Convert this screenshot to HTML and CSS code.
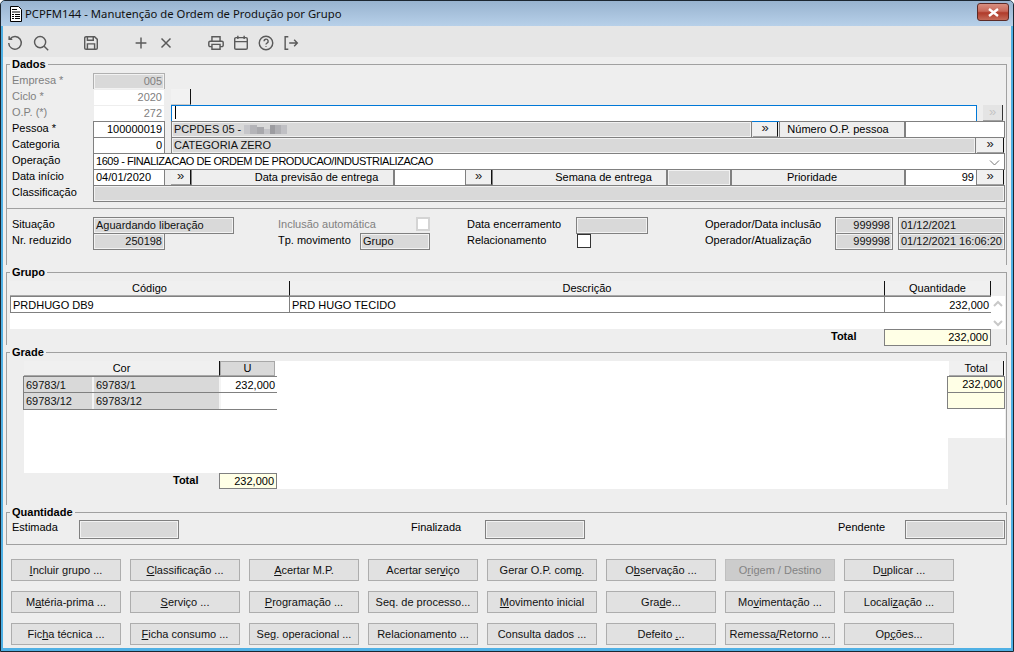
FILE: index.html
```html
<!DOCTYPE html>
<html lang="pt">
<head>
<meta charset="utf-8">
<title>PCPFM144</title>
<link rel="stylesheet" href="styles.css">
</head>
<body>
<div class="window">
  <header class="titlebar">
    <svg class="appicon" width="16" height="16" viewBox="0 0 16 16"><path d="M2.500 .5h8l3 3v12h-11z" fill="#fff" stroke="#000"/><path d="M4 3h5v1H4zM4 5.500h8v1H4zM4 8h2v1H4zM7 8h5v1H7zM4 10h2v1H4zM7 10h5v1H7zM4 12h2v1H4zM7 12h5v1H7z" fill="#000"/></svg>
    <span class="title">PCPFM144 - Manutenção de Ordem de Produção por Grupo</span>
    <span class="close"><svg width="13" height="9" viewBox="0 0 13 9"><path d="M2 1l9 7M11 1l-9 7" stroke="#fff" stroke-width="2.400" fill="none"/></svg></span>
  </header>
  <div class="toolbar">
    <svg class="tool first" viewBox="0 0 20 20"><path d="M4.500 5.500A7 7 0 1 1 3 10M3.500 2.500v3.500H7" /></svg>
    <svg class="tool" viewBox="0 0 20 20"><circle cx="9" cy="9" r="6.200"/><path d="M13.500 13.500L18 18"/></svg>
    <svg class="tool gap25" viewBox="0 0 20 20"><path d="M3 4.500A1.500 1.500 0 0 1 4.500 3H14l3 3v9.500a1.500 1.500 0 0 1-1.500 1.500h-11A1.500 1.500 0 0 1 3 15.500zM6 3v4h6.500V3M6 17v-6h8v6"/></svg>
    <svg class="tool gap25" viewBox="0 0 20 20"><path d="M10 4v12M4 10h12"/></svg>
    <svg class="tool" viewBox="0 0 20 20"><path d="M5 5l10 10M15 5L5 15"/></svg>
    <svg class="tool gap25" viewBox="0 0 20 20"><path d="M5.500 8V3h9v5M5.500 14H3.500A1.500 1.500 0 0 1 2 12.500V9.500A1.500 1.500 0 0 1 3.500 8h13A1.500 1.500 0 0 1 18 9.500v3a1.500 1.500 0 0 1-1.500 1.500h-2M5.500 11.500h9V17h-9z"/></svg>
    <svg class="tool" viewBox="0 0 20 20"><path d="M4.500 4h11A1.500 1.500 0 0 1 17 5.500v10a1.500 1.500 0 0 1-1.500 1.500h-11A1.500 1.500 0 0 1 3 15.500v-10A1.500 1.500 0 0 1 4.500 4zM3 8.500h14M6.500 2v3.500M13.500 2v3.500"/></svg>
    <svg class="tool" viewBox="0 0 20 20"><circle cx="10" cy="10" r="7.500"/><path d="M7.800 8a2.300 2.300 0 1 1 3.300 2.100c-.8.400-1.100.9-1.100 1.700M10 13.500v1"/></svg>
    <svg class="tool" viewBox="0 0 20 20"><path d="M7 3H3.500v14H7M8 10h9M13.500 6.500L17 10l-3.500 3.500"/></svg>
  </div>

  <main class="client">
    <fieldset class="sec dados">
      <legend>Dados</legend>
      <div class="row"><span class="lbl off w81">Empresa *</span><span class="f ro num off w72">005</span></div>
      <div class="row"><span class="lbl off w81">Ciclo *</span><span class="f soft num off w72">2020</span><span class="b blank w20 ml6"></span></div>
      <div class="row"><span class="lbl off w81">O.P. (*)</span><span class="f soft num off w72">272</span><span class="f focus w806 ml6"><i class="caret"></i></span><span class="b dim w20 ml6">»</span></div>
      <div class="row"><span class="lbl w81">Pessoa *</span><span class="f num w72">100000019</span><span class="f ro w581 ml6">PCPDES 05 -&nbsp;<svg class="blur" width="43" height="9" viewBox="0 0 43 9"><path d="M0 0h6v9H0z" fill="#c6c6ca"/><path d="M6 0h7v9H6z" fill="#b4b4b8"/><path d="M13 2h7v7h-7z" fill="#a8a8ac"/><path d="M20 4h6v5h-6z" fill="#c4c4c8"/><path d="M26 0h5v9h-5z" fill="#9c9ca0"/><path d="M31 0h6v9h-6z" fill="#b0b0b4"/><path d="M37 0h6v9h-6z" fill="#c0c0c4"/></svg></span><span class="b w25 ml1">»</span><span class="f cap pr8 w126 ml1">Número O.P. pessoa</span><span class="f w100"></span></div>
      <div class="row"><span class="lbl w81">Categoria</span><span class="f num w72">0</span><span class="f ro w805 ml6">CATEGORIA ZERO</span><span class="b w27 ml1">»</span></div>
      <div class="row"><span class="lbl w81">Operação</span><span class="f caps w912">1609 - FINALIZACAO DE ORDEM DE PRODUCAO/INDUSTRIALIZACAO<svg class="chev" width="11" height="6" viewBox="0 0 11 6"><path d="M1 .5l4.500 4.500L10 .5" fill="none" stroke="#777"/></svg></span></div>
      <div class="row"><span class="lbl w81">Data início</span><span class="f w72">04/01/2020</span><span class="b w20 ml6">»</span><span class="f cap pl50 w203">Data previsão de entrega</span><span class="f w72"></span><span class="b w26">»</span><span class="f cap pl50 w175">Semana de entrega</span><span class="f ro w64"></span><span class="f cap pr12 w174">Prioridade</span><span class="f num w72">99</span><span class="b w27">»</span></div>
      <div class="row"><span class="lbl w81">Classificação</span><span class="f ro w912"></span></div>
    </fieldset>

    <section class="sec status">
      <div class="row"><span class="lbl w81">Situação</span><span class="f ro w141">Aguardando liberação</span><span class="lbl off w138 ml44">Inclusão automática</span><span class="chk dis"></span><span class="lbl w109 ml37">Data encerramento</span><span class="f ro w72"></span><span class="lbl w130 ml57">Operador/Data inclusão</span><span class="f ro num w58">999998</span><span class="f ro w107 ml5">01/12/2021</span></div>
      <div class="row"><span class="lbl w81">Nr. reduzido</span><span class="f ro num w72">250198</span><span class="lbl w82 ml113">Tp. movimento</span><span class="f ro w70">Grupo</span><span class="lbl w110 ml37">Relacionamento</span><span class="chk"></span><span class="lbl w130 ml114">Operador/Atualização</span><span class="f ro num w58">999998</span><span class="f ro w107 ml5">01/12/2021 16:06:20</span></div>
    </section>

    <fieldset class="sec grupo">
      <legend>Grupo</legend>
      <div class="ghead"><span class="h w280">Código</span><span class="h w595">Descrição</span><span class="h w106">Quantidade</span></div>
      <div class="gbody">
        <div class="grow"><span class="c w280">PRDHUGO DB9</span><span class="c w595">PRD HUGO TECIDO</span><span class="c num w106">232,000</span></div>
        <div class="scroll">
          <svg width="10" height="7" viewBox="0 0 10 7"><path d="M1 6l4-4 4 4" fill="none" stroke="#c8c8c8" stroke-width="2"/></svg>
          <svg width="10" height="7" viewBox="0 0 10 7"><path d="M1 1l4 4 4-4" fill="none" stroke="#c8c8c8" stroke-width="2"/></svg>
        </div>
      </div>
      <div class="gtotal"><span class="tot w53">Total</span><span class="f sum num w107">232,000</span></div>
    </fieldset>

    <fieldset class="sec grade">
      <legend>Grade</legend>
      <div class="gradegrid">
        <div class="gleft">
          <div class="sheet">
            <div class="ghead"><span class="h w196">Cor</span><span class="h u w55">U</span></div>
            <div class="crow first"><span class="c ro2 w70">69783/1</span><span class="c ro2 w127">69783/1</span><span class="c num w56">232,000</span></div>
            <div class="crow"><span class="c ro2 w70">69783/12</span><span class="c ro2 w127">69783/12</span><span class="c num w56"></span></div>
          </div>
          <div class="gfoot"><span class="tot w46 ml149">Total</span><span class="f sum num w58">232,000</span><span class="fill"></span></div>
        </div>
        <div class="gright">
          <span class="h w55 rh">Total</span>
          <span class="f sum num w58 rc">232,000</span>
          <span class="f sum num w58 rc"></span>
        </div>
      </div>
    </fieldset>

    <fieldset class="sec quant">
      <legend>Quantidade</legend>
      <div class="qrow"><span class="lbl w67">Estimada</span><span class="f ro q w100"></span><span class="lbl w74 ml232">Finalizada</span><span class="f ro q w100"></span><span class="lbl w67 ml253">Pendente</span><span class="f ro q w100"></span></div>
    </fieldset>

    <nav class="buttons">
      <button><u>I</u>ncluir grupo ...</button>
      <button><u>C</u>lassificação ...</button>
      <button><u>A</u>certar M.P.</button>
      <button>Acertar ser<u>v</u>iço</button>
      <button>Gerar O.P. com<u>p</u>.</button>
      <button>O<u>b</u>servação ...</button>
      <button class="off-btn">O<u>r</u>igem / Destino</button>
      <button>D<u>u</u>plicar ...</button>
      <button>M<u>a</u>téria-prima ...</button>
      <button><u>S</u>erviço ...</button>
      <button><u>P</u>rogramação ...</button>
      <button>Seq. de processo...</button>
      <button><u>M</u>ovimento inicial</button>
      <button>Gra<u>d</u>e...</button>
      <button>Mo<u>v</u>imentação ...</button>
      <button>Locali<u>z</u>ação ...</button>
      <button>Fic<u>h</u>a técnica ...</button>
      <button><u>F</u>icha consumo ...</button>
      <button>Se<u>g</u>. operacional ...</button>
      <button>Relacionamento ...</button>
      <button>Consulta dados ...</button>
      <button>Defeito <u>.</u>..</button>
      <button>Remessa<u>/</u>Retorno ...</button>
      <button>Op<u>ç</u>ões...</button>
    </nav>
  </main>
</div>
</body>
</html>
```
FILE: styles.css
```css
* { box-sizing: border-box; }
html, body { margin: 0; padding: 0; }
body { width: 1014px; height: 652px; overflow: hidden; font: 11px/1 "Liberation Sans", Arial, sans-serif; color: #000; background: #fff; }

.window { width: 1014px; height: 652px; display: flex; flex-direction: column; border: 1px solid #1c2630; border-radius: 5px 5px 0 0; background: #4fb0e4; overflow: hidden; }

.titlebar { height: 25px; flex: none; display: flex; align-items: center; padding: 0 4px 0 7px; background: linear-gradient(#98b3cf, #b7d0e9); }
.appicon { flex: none; }
.title { margin-left: 1px; font: 11.3px "Noto Sans", sans-serif; color: #111; white-space: nowrap; flex: 1; }
.close { flex: none; width: 32px; height: 18px; margin-top: -3px; display: flex; align-items: center; justify-content: center; border: 1px solid #5c2a26; border-radius: 3px; background: linear-gradient(#d88f80 0%, #c8695a 45%, #b03b2a 55%, #c46a58 100%); }

.toolbar { height: 31px; flex: none; margin: 0 2px; display: flex; align-items: center; padding: 2px 0 0 3px; background: #e6e6e6; gap: 7px; }
.tool { width: 18px; height: 18px; flex: none; fill: none; stroke: #5a5a5a; stroke-width: 1.600; }
.first { margin-right: 1px; }
.gap25 { margin-left: 25px; }

.client { flex: 1; margin: 0 2px 3px; padding: 0 3px; background: #eeeeee; }

.sec { margin: 0; padding: 0; min-width: 0; width: 1001px; border: 1px solid #a0a0a0; border-bottom: 0; }
.sec legend { margin-left: -2px; padding: 0 2px; height: 14px; font-weight: bold; font-size: 11px; line-height: 14px; }

.dados { height: 151px; padding: 2px 0 0 5px; }
.status { height: 57px; padding: 8px 0 0 5px; border-width: 1px 1px 0; }
.grupo { height: 80px; padding: 2px 0 0 3px; }
.grupo legend { margin-left: 0; }
.grade { height: 160px; padding: 2px 0 0 17px; }
.grade legend { margin-left: -14px; }
.quant { height: 40px; padding: 1px 0 0 5px; border-bottom: 1px solid #a0a0a0; }

.row { display: flex; height: 16px; align-items: flex-start; }
.lbl { display: block; height: 16px; line-height: 15px; white-space: nowrap; flex: none; }
.off { color: #808080; }

.f { display: block; flex: none; height: 17px; padding: 0 2px; line-height: 15px; border: 1px solid #808080; background: #fff; white-space: nowrap; position: relative; overflow: hidden; }
.num { text-align: right; }
.caps { letter-spacing: -.47px; }
.ro { background: #d9d9d9; box-shadow: inset 0 0 0 1px #f2f2f2; color: #111; }
.soft { border-color: #eee; box-shadow: inset 0 0 0 1px #fff; }
.ro.off { color: #808080; border-color: #b0b0b0; }
.cap { background: #eeeeee; text-align: center; }
.pl50 { padding-left: 50px; }
.pr12 { padding-right: 14px; }
.pr8 { padding-right: 10px; }
.sum { background: #ffffe6; }
.focus { border-color: #0078d7; }
.caret { display: inline-block; width: 1px; height: 13px; background: #000; vertical-align: top; margin: 0 0 0 1px; }
.chev { float: right; margin: 6px 2px 0 0; }
.blur { vertical-align: -1px; }

.b { display: block; flex: none; height: 16px; line-height: 14px; text-align: center; font-size: 13px; color: #222; background: #f0f0f0; border-right: 1px solid #111; border-bottom: 1px solid #a0a0a0; }
.blank { background: #f2f2f2; border-bottom-color: #c8c8c8; }
.dim { color: #c4c4c4; background: #e4e4e4; border-right-color: #333; }

.chk { display: block; flex: none; width: 14px; height: 14px; margin-top: 1px; background: #fff; border: 1px solid #333; }
.chk.dis { border: 2px solid #d4d4d4; margin-top: 0; }

.h { display: block; flex: none; height: 15px; line-height: 15px; text-align: center; background: #f0f0f0; border-right: 1px solid #111; border-bottom: 1px solid #a8a8a8; }
.u { background: #d9d9d9; border: 1px solid #a8a8a8; line-height: 13px; }
.ghead { display: flex; height: 15px; }
.gbody { display: flex; width: 995px; height: 33px; background: #fff; }
.grow { display: flex; height: 17px; width: 981px; flex: none; border: 1px solid #808080; border-top-width: 1px; }
.c { display: block; flex: none; height: 100%; line-height: 16px; padding: 0 2px; border-right: 1px solid #808080; white-space: nowrap; background: #fff; }
.grow .c:last-child, .crow .c:last-child { border-right: 0; }
.grow .w280 { width: 279px; }
.scroll { flex: 1; display: flex; flex-direction: column; align-items: center; gap: 10px; padding-top: 1px; }
.scroll svg { flex: none; margin-top: 3px; }
.gtotal { display: flex; justify-content: flex-end; width: 981px; height: 17px; align-items: flex-start; }
.tot { font-weight: bold; line-height: 15px; flex: none; display: block; }

.gradegrid { display: flex; width: 981px; }
.gleft { width: 924px; flex: none; }
.sheet { height: 112px; background: #fff; }
.crow { display: flex; height: 17px; width: 254px; margin-left: -1px; border: 1px solid #808080; border-top: 0; }
.crow.first { height: 17px; border-top: 1px solid #808080; }
.ro2 { background: #d9d9d9; border-right: 2px solid #f4f4f4; color: #111; }
.gfoot { display: flex; height: 16px; }
.fill { flex: 1; background: #fff; height: 16px; }
.gfoot .f { height: 16px; border-bottom-color: #808080; }
.gright { width: 57px; height: 77px; flex: none; background: #fff; display: flex; flex-direction: column; align-items: flex-start; }
.rh { margin-left: 1px; }
.rc { margin-left: -1px; margin-bottom: -1px; }

.qrow { display: flex; height: 18px; align-items: flex-start; }
.q { height: 19px; }

.buttons { display: grid; grid-template-columns: repeat(8, 110px); grid-auto-rows: 22px; column-gap: 9px; row-gap: 10px; padding: 14px 0 0 5px; }
.buttons button { margin: 0; padding: 0; font: 11px "Liberation Sans", Arial, sans-serif; color: #111; background: #e1e1e1; border: 1px solid #adadad; text-align: center; white-space: nowrap; }
.buttons .off-btn { background: #cccccc; color: #838383; border-color: #bfbfbf; }

.w20 { width: 20px; } .w25 { width: 25px; } .w26 { width: 26px; } .w27 { width: 27px; }
.w46 { width: 46px; } .w53 { width: 53px; } .w55 { width: 55px; } .w56 { width: 56px; } .w58 { width: 58px; }
.w64 { width: 64px; } .w67 { width: 67px; } .w70 { width: 70px; } .w72 { width: 72px; } .w74 { width: 74px; }
.w81 { width: 81px; } .w82 { width: 82px; } .w100 { width: 100px; } .w106 { width: 106px; } .w107 { width: 107px; }
.w109 { width: 109px; } .w110 { width: 110px; } .w126 { width: 126px; } .w127 { width: 127px; } .w130 { width: 130px; }
.w138 { width: 138px; } .w141 { width: 141px; } .w174 { width: 174px; } .w175 { width: 175px; } .w196 { width: 196px; }
.w203 { width: 203px; } .w280 { width: 280px; } .w581 { width: 581px; } .w595 { width: 595px; } .w805 { width: 805px; }
.w806 { width: 806px; } .w912 { width: 912px; }
.ml1 { margin-left: 1px; } .ml5 { margin-left: 5px; } .ml6 { margin-left: 6px; } .ml37 { margin-left: 37px; }
.ml44 { margin-left: 44px; } .ml57 { margin-left: 57px; } .ml113 { margin-left: 113px; }
.ml114 { margin-left: 114px; } .ml149 { margin-left: 149px; } .ml232 { margin-left: 232px; } .ml253 { margin-left: 253px; }
```
